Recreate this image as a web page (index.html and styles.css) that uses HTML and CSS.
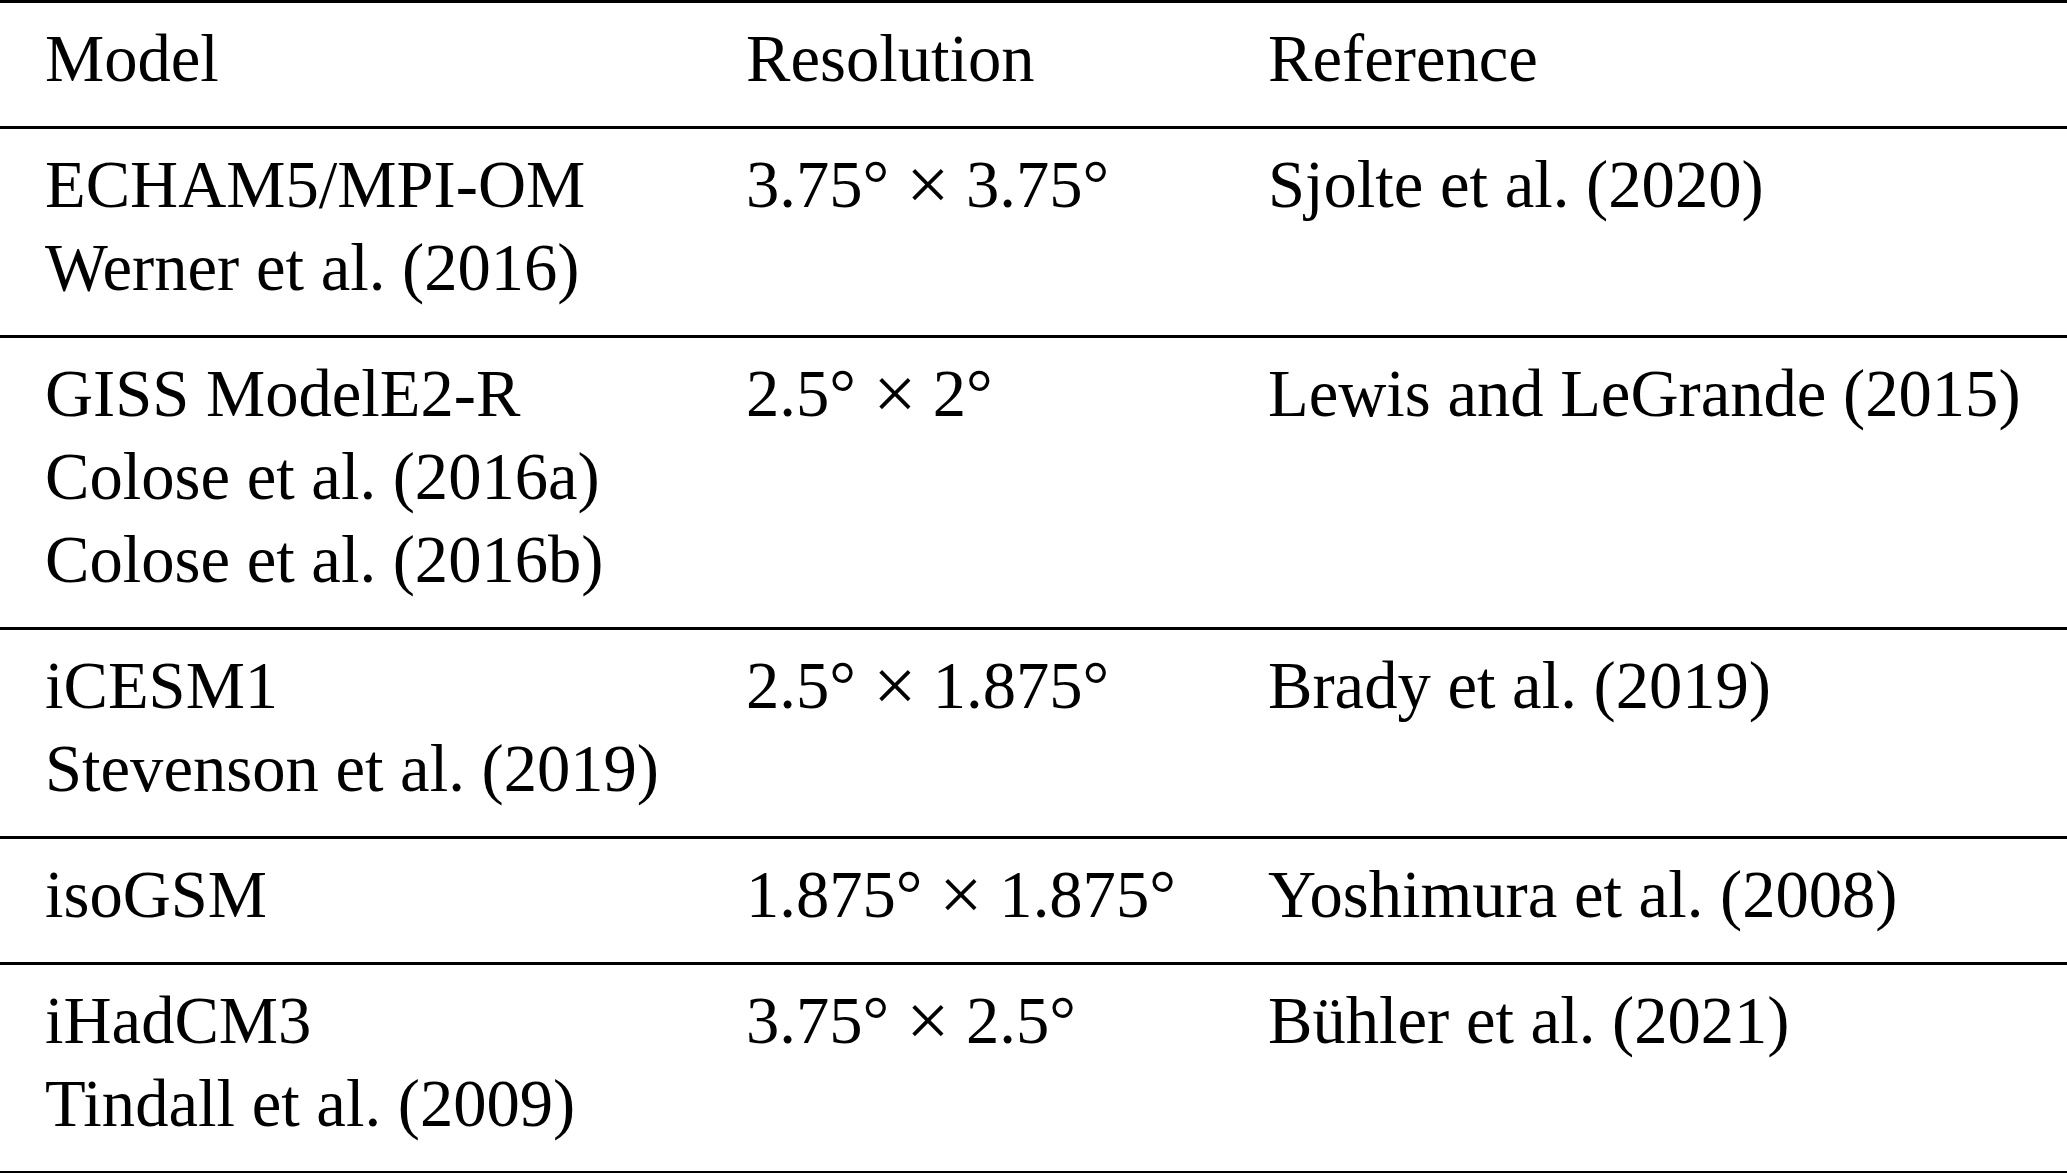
FILE: index.html
```html
<!DOCTYPE html>
<html lang="en">

<head>
  <meta charset="UTF-8">
  <meta name="viewport" content="width=device-width, initial-scale=1.0">
  <title>Models</title>
  <link rel="stylesheet" href="styles.css">
</head>

<body>
  <table class="models">
    <colgroup>
      <col class="col-model">
      <col class="col-res">
      <col class="col-ref">
    </colgroup>
    <thead>
      <tr>
        <th>Model</th>
        <th>Resolution</th>
        <th>Reference</th>
      </tr>
    </thead>
    <tbody>
      <tr>
        <td>ECHAM5/MPI-OM<br>Werner et al. (2016)</td>
        <td>3.75° <span class="times">×</span> 3.75°</td>
        <td>Sjolte et al. (2020)</td>
      </tr>
      <tr>
        <td>GISS ModelE2-R<br>Colose et al. (2016a)<br>Colose et al. (2016b)</td>
        <td>2.5° <span class="times">×</span> 2°</td>
        <td>Lewis and LeGrande (2015)</td>
      </tr>
      <tr>
        <td>iCESM1<br>Stevenson et al. (2019)</td>
        <td>2.5° <span class="times">×</span> 1.875°</td>
        <td>Brady et al. (2019)</td>
      </tr>
      <tr>
        <td>isoGSM</td>
        <td>1.875° <span class="times">×</span> 1.875°</td>
        <td>Yoshimura et al. (2008)</td>
      </tr>
      <tr>
        <td>iHadCM3<br>Tindall et al. (2009)</td>
        <td>3.75° <span class="times">×</span> 2.5°</td>
        <td>Bühler et al. (2021)</td>
      </tr>
    </tbody>
  </table>
</body>

</html>
```

FILE: styles.css
```css
* {
  padding: 0;
  margin: 0;
}

html,
body {
  background: #fff;
  overflow: hidden;
}

.models {
  width: 100%;
  table-layout: fixed;
  border-collapse: collapse;
  font-family: "Liberation Serif", "Times New Roman", serif;
  font-size: 66.6px;
  line-height: 83px;
  color: #000;
}

.col-model {
  width: 701px;
}

.col-res {
  width: 522px;
}

.models tr {
  border-top: 3px solid #000;
}

.models tbody tr:last-child {
  border-bottom: 3px solid #000;
}

.models th,
.models td {
  font-weight: normal;
  text-align: left;
  vertical-align: top;
  white-space: nowrap;
  padding: 14px 0 26px 45px;
}

/* math-style multiplication sign, a bit wider than the text one */
.times {
  display: inline-block;
  margin: 0 3px;
  transform: scale(1.15);
}
```
